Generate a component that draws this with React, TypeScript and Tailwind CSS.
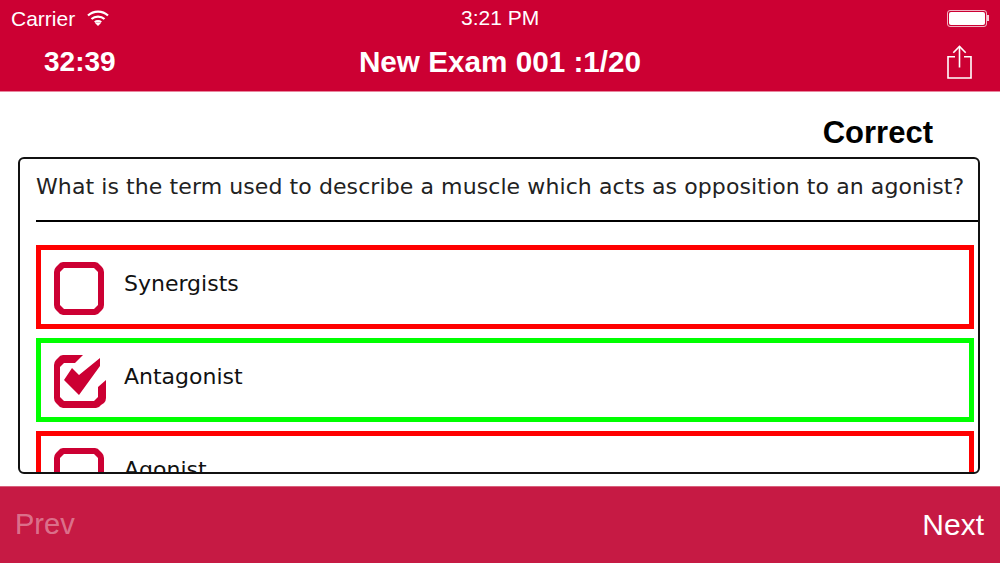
import React from 'react';

const WifiIcon = () => (
  <svg width="22" height="16" viewBox="0 0 22 16" fill="none" stroke="white" strokeWidth="2.2">
    <path d="M1 5.5C6.5 0.2 15.5 0.2 21 5.5" />
    <path d="M4.5 9C8 5.7 14 5.7 17.5 9" />
    <path d="M7.8 12.2C9.6 10.6 12.4 10.6 14.2 12.2" />
    <path d="M11 16L8.2 13.2C9.8 12 12.2 12 13.8 13.2Z" fill="white" stroke="none" />
  </svg>
);

const ShareIcon = () => (
  <svg width="25" height="34" viewBox="0 0 25 34" fill="none" stroke="white" strokeWidth="1.6">
    <path d="M8 11.8H1V33H24V11.8H17" />
    <path d="M12.5 1.5V22.5" />
    <path d="M6.3 7.8L12.5 1.5L18.7 7.8" />
  </svg>
);

const EmptyBox = () => (
  <svg width="50" height="53" viewBox="0 0 50 53" className="shrink-0">
    <path
      fillRule="evenodd"
      fill="#cc0033"
      d="M9 0H41Q44 0 46 3L48 5Q50 7 50 10V43Q50 46 48 48L46 50Q44 53 41 53H9Q6 53 4 50L2 48Q0 46 0 43V10Q0 7 2 5L4 3Q6 0 9 0ZM10 6L6 10V43L10 47H40L44 43V10L40 6Z"
    />
  </svg>
);

const CheckedBox = () => (
  <svg width="52" height="53" viewBox="0 0 52 53" className="shrink-0">
    <path
      fill="#cc0033"
      d="M9 0H29L21 8H10L6 12V42L10 46H40L44 42V32L52 25V43Q52 46 50 48L47 50Q45 53 42 53H9Q6 53 4 50L2 48Q0 46 0 43V10Q0 7 2 5L4 3Q6 0 9 0Z"
    />
    <path fill="#cc0033" d="M10 25L18 13L25 20L46 3L46 11L25 40Z" />
  </svg>
);

const options = [
  { label: 'Synergists', border: 'border-[#ff0000]', checked: false },
  { label: 'Antagonist', border: 'border-[#00ff00]', checked: true },
  { label: 'Agonist', border: 'border-[#ff0000]', checked: false },
];

const App = () => {
  return (
    <div className="w-[1000px] h-[563px] flex flex-col bg-white overflow-hidden font-['Liberation_Sans',sans-serif]">
      <div className="h-[92px] shrink-0 bg-[#cc0033] text-white flex flex-col border-b border-[#e8869e]">
        <div className="h-[36px] px-[11px] flex items-center justify-between relative">
          <div className="flex items-center gap-[12px] text-[21px] leading-none">
            <span>Carrier</span>
            <WifiIcon />
          </div>
          <span className="absolute left-[461px] top-[8px] text-[21px] leading-[20px]">3:21 PM</span>
          <div className="flex items-center">
            <div className="w-[40px] h-[17px] rounded-[3px] border border-white/70 p-[1px]">
              <div className="w-full h-full rounded-[2px] bg-white" />
            </div>
            <div className="w-[2px] h-[6px] bg-white/80" />
          </div>
        </div>
        <div className="flex-1 flex items-center justify-between pl-[44px] pr-[28px] pb-[3px] relative">
          <span className="text-[28px] leading-none font-bold">32:39</span>
          <span className="absolute left-0 right-0 text-center text-[29.7px] leading-none font-bold">New Exam 001 :1/20</span>
          <ShareIcon />
        </div>
      </div>

      <div className="h-[65px] shrink-0 flex items-center justify-end pr-[67px] pt-[16px]">
        <span className="text-[31px] leading-none font-bold text-black">Correct</span>
      </div>

      <div className="ml-[18px] mr-[20px] h-[317px] shrink-0 rounded-[6px] border-2 border-[#111] overflow-hidden pl-[16px] font-['DejaVu_Sans',sans-serif]">
        <div className="h-[63px] border-b-2 border-black flex items-center pb-[5px]">
          <p className="text-[22px] tracking-[0.09px] leading-none text-[#222] whitespace-nowrap">
            What is the term used to describe a muscle which acts as opposition to an agonist?
          </p>
        </div>
        <div className="mt-[23px] mr-[4px] flex flex-col gap-[9px]">
          {options.map((opt) => (
            <div
              key={opt.label}
              className={`h-[84px] shrink-0 border-[5px] ${opt.border} flex items-start pl-[13px] pt-[12px]`}
            >
              <div className="w-[70px] shrink-0">{opt.checked ? <CheckedBox /> : <EmptyBox />}</div>
              <span className="mt-[11px] text-[22px] leading-none text-[#111]">{opt.label}</span>
            </div>
          ))}
        </div>
      </div>

      <div className="mt-[12px] flex-1 bg-[#c61a44] border-t border-[#d9607c] flex items-center justify-between pl-[15px] pr-[16px] pb-[1px] text-[29px] leading-none">
        <span className="text-white/40">Prev</span>
        <span className="text-white text-[30px]">Next</span>
      </div>
    </div>
  );
};

export default App;
